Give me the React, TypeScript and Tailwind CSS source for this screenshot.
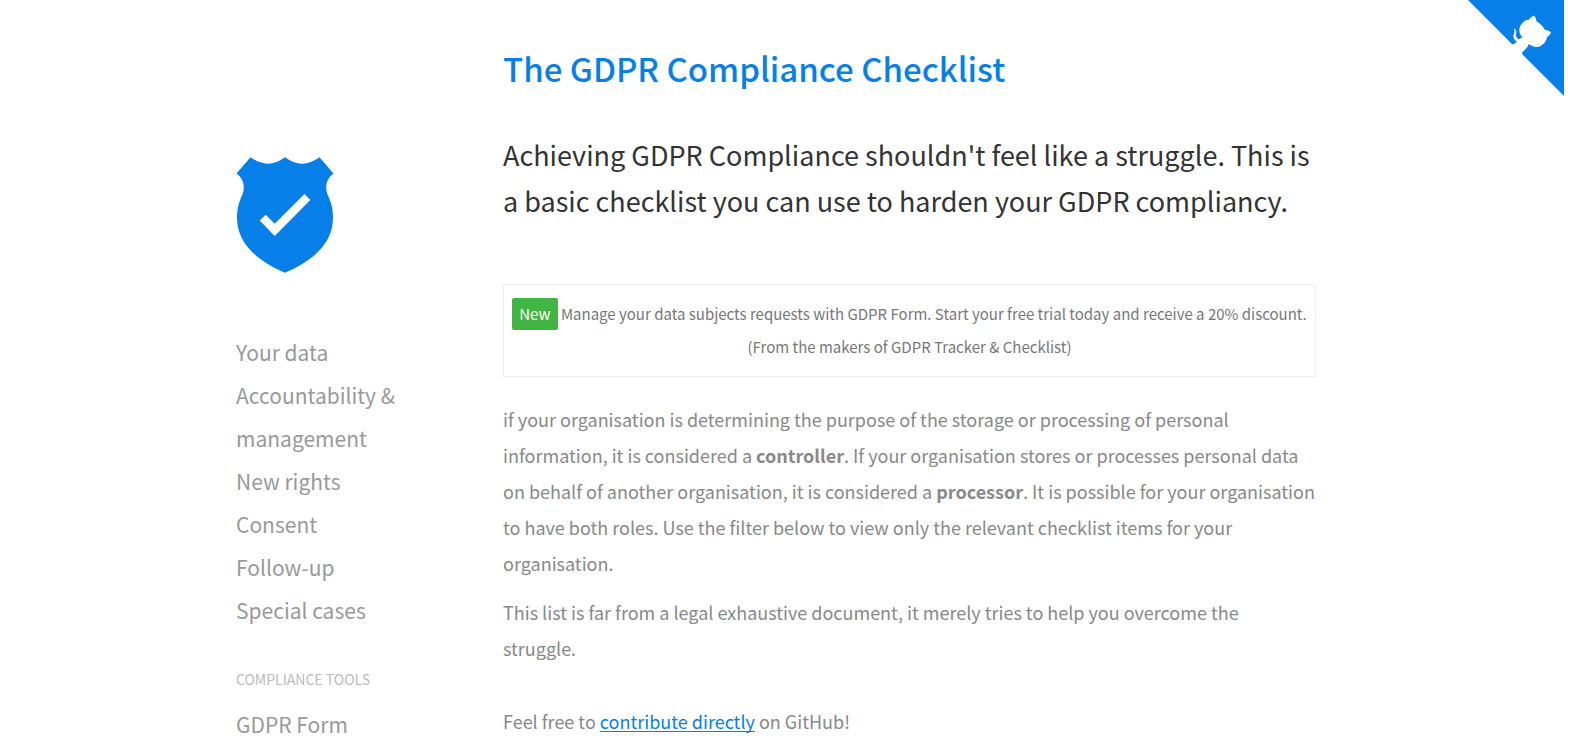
const sections = [
  { label: "Your data", href: "#your-data" },
  { label: "Accountability & management", href: "#accountability" },
  { label: "New rights", href: "#new-rights" },
  { label: "Consent", href: "#consent" },
  { label: "Follow-up", href: "#follow-up" },
  { label: "Special cases", href: "#special-cases" },
];

const tools = [{ label: "GDPR Form", href: "#gdpr-form" }];

function GithubCorner() {
  return (
    <a href="#github" aria-label="View source on GitHub" className="absolute top-0 right-[11px]">
      <svg viewBox="0 0 250 250" className="size-24" aria-hidden="true">
        <path fill="#067fe8" d="M0,0 L115,115 L130,115 L142,142 L250,250 L250,0 Z" />
        <path
          fill="#fff"
          d="M128.3,109.0 C113.8,99.7 119.0,89.6 119.0,89.6 C122.0,82.7 120.5,78.6 120.5,78.6 C119.2,72.0 123.4,76.3 123.4,76.3 C127.3,80.9 125.5,87.3 125.5,87.3 C122.9,97.6 130.6,101.9 134.4,103.2"
        />
        <path
          fill="#fff"
          d="M115.0,115.0 C114.9,115.1 118.7,116.5 119.8,115.4 L133.7,101.6 C136.9,99.2 139.9,98.4 142.2,98.6 C133.8,88.0 127.5,74.4 143.8,58.0 C148.5,53.4 154.0,51.2 159.7,51.0 C160.3,49.4 163.2,43.6 171.4,40.1 C171.4,40.1 176.1,42.5 178.8,56.2 C183.1,58.6 187.2,61.8 190.9,65.4 C194.5,69.0 197.7,73.2 200.1,77.6 C213.8,80.2 216.3,84.9 216.3,84.9 C212.7,93.1 206.9,96.0 205.4,96.6 C205.1,102.4 203.0,107.8 198.3,112.5 C181.9,128.9 168.3,122.5 157.7,114.1 C157.9,116.9 156.7,120.9 152.7,124.9 L141.0,136.5 C139.8,137.7 141.6,141.9 141.8,141.8 Z"
        />
      </svg>
    </a>
  );
}

function ShieldLogo() {
  return (
    <svg viewBox="0 0 98 116" className="h-[116px] w-[98px]" aria-hidden="true">
      <path
        fill="#067fe8"
        d="M14.5 0.3 Q32 13 49 0.3 Q66 13 83.5 0.3 L97.5 16.5 C90 22 89 30 91.3 37 C94.5 44 97 50 97 61 C97 86 77 104 49 115.7 C21 104 1 86 1 61 C1 50 3.5 44 6.7 37 C9 30 8 22 .5 16.5 Z"
      />
      <path fill="#fff" d="M23.7 63.5 L29.7 57.7 L38.7 66.7 L68.5 37 L74.3 43 L38.7 79 Z" />
    </svg>
  );
}

function NavLinks({ items }: { items: { label: string; href: string }[] }) {
  return (
    <ul>
      {items.map((item) => (
        <li key={item.label}>
          <a href={item.href} className="text-[21px] leading-[43px] text-[#999]">
            {item.label}
          </a>
        </li>
      ))}
    </ul>
  );
}

export default function App() {
  return (
    <div className="relative min-h-screen bg-white pr-[11px] font-['Noto_Sans_CJK_SC',sans-serif] text-[#888]">
      <GithubCorner />
      <div className="mx-auto flex max-w-[1092px]">
        <aside className="w-[267px] shrink-0 pt-[157px]">
          <a href="#top" aria-label="Home" className="block w-[98px]">
            <ShieldLogo />
          </a>
          <nav className="mt-[58px] w-[180px]">
            <NavLinks items={sections} />
            <h2 className="mt-[23px] text-[14px] leading-[48px] text-[#bbb]">COMPLIANCE TOOLS</h2>
            <NavLinks items={tools} />
          </nav>
        </aside>
        <main className="min-w-0 flex-1 pt-[42px] pr-3 text-[18px] leading-[36px]">
          <h1 className="text-[33px] leading-[52px] font-medium text-[#067fe8]">The GDPR Compliance Checklist</h1>
          <p className="mt-[38px] text-[27px] leading-[46px] text-[#333]">
            Achieving GDPR Compliance shouldn't feel like a struggle. This is a basic checklist you can use to harden
            your GDPR compliancy.
          </p>
          <div className="mt-[60px] border border-[#eee] px-2 pt-3 pb-[13px] text-center text-[15px] leading-[33px] text-[#777]">
            <span className="inline-block rounded-xs bg-[#41b541] px-[7px] leading-[32px] text-white">New</span> Manage
            your data subjects requests with GDPR Form. Start your free trial today and receive a 20% discount. (From
            the makers of GDPR Tracker &amp; Checklist)
          </div>
          <p className="mt-[24px]">
            if your organisation is determining the purpose of the storage or processing of personal information, it is
            considered a <strong>controller</strong>. If your organisation stores or processes personal data on behalf
            of another organisation, it is considered a <strong>processor</strong>. It is possible for your organisation
            to have both roles. Use the filter below to view only the relevant checklist items for your organisation.
          </p>
          <p className="mt-[13px] pr-6">
            This list is far from a legal exhaustive document, it merely tries to help you overcome the struggle.
          </p>
          <p className="mt-[37px]">
            Feel free to{" "}
            <a
              href="#contribute"
              className="text-[#067fe8] underline decoration-1 underline-offset-2 [text-decoration-skip-ink:none]"
            >
              contribute directly
            </a>{" "}
            on GitHub!
          </p>
        </main>
      </div>
    </div>
  );
}
